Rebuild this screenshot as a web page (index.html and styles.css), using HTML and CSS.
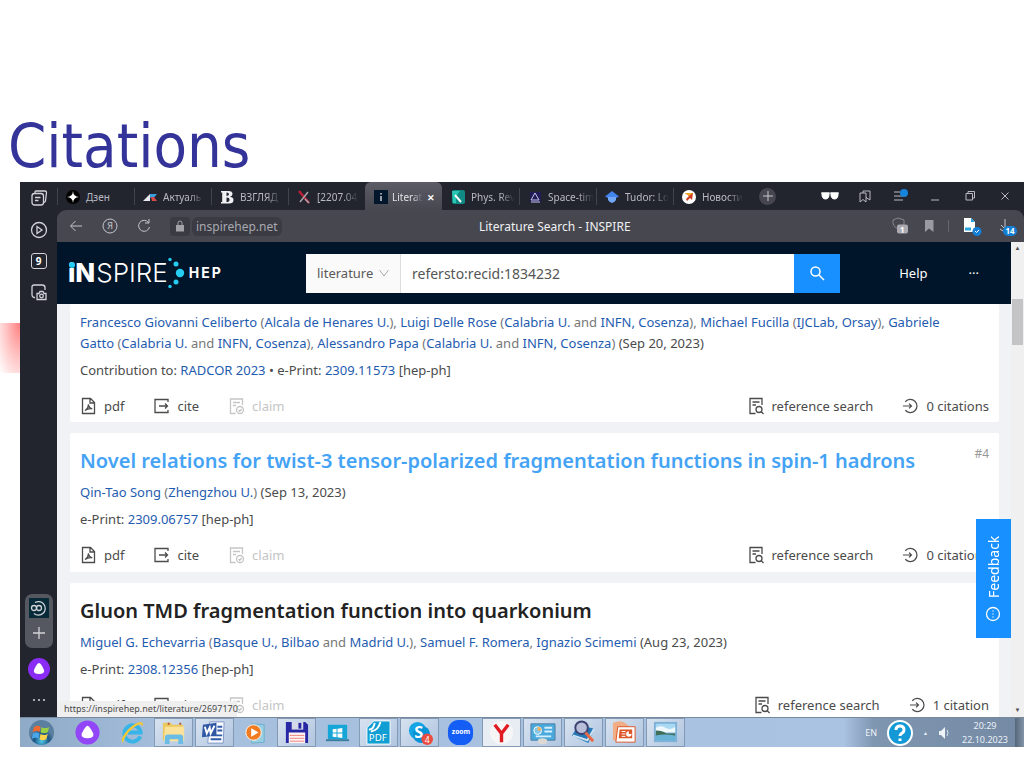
FILE: index.html
```html
<!DOCTYPE html>
<html lang="en">
<head>
<meta charset="utf-8">
<title>Citations</title>
<link rel="stylesheet" href="styles.css">
</head>
<body>
<svg class="defs" aria-hidden="true">
  <symbol id="pdf" viewBox="0 0 16 18"><path d="M2 1.500h8l4 4v11H2zM9.500 1.500V6H14M4.500 13.500C7 12 8 10 7.800 7.500C8.500 10.500 10 11.500 11.800 11.800C9 11.500 6.500 12 4.500 13.500z"/></symbol>
  <symbol id="cite" viewBox="0 0 16 18"><path d="M14.500 5V2.500H1.500V15.500H14.500V13M5.500 9H14M11.500 6.500L14 9L11.500 11.500"/></symbol>
  <symbol id="claim" viewBox="0 0 16 18"><path d="M14 8V2H2V16.500H7M4.500 5.500H11.500M4.500 8.500H7.500"/><circle cx="11.500" cy="13" r="3.500"/><path d="M10 13l1.200 1.200L13.300 12"/></symbol>
  <symbol id="ref" viewBox="0 0 16 18"><path d="M13.500 8V1.500H1.500V16.500H7M4 5H11M4 8H7.500M12.500 14.500L15 17"/><circle cx="10.500" cy="12.500" r="3"/></symbol>
  <symbol id="citations" viewBox="0 0 18 18"><path d="M3.500 4.500A7 7 0 1 1 3.500 13.500M1 9H10M7.500 6.500L10 9L7.500 11.500"/></symbol>
</svg>
<main class="slide">
  <h1 class="slide-title">Citations</h1>
  <div class="accent"></div>
  <section class="screen">
    <div class="browser">
      <aside class="side">
        <svg width="18" height="18" viewBox="0 0 18 18"><path d="M5 4V3q0-1 1-1h9q1.500 0 1.500 1.500L15.500 12q0 1-2 1.500"/><rect x="2" y="4.500" width="11.500" height="11.500" rx="2.500"/><path d="M5 8.500h5.500M5 11.500h3.500"/></svg>
        <svg width="18" height="18" viewBox="0 0 18 18"><circle cx="9" cy="9" r="7.500"/><path d="M7 5.500L12 9L7 12.500z"/></svg>
        <span class="nine">9</span>
        <svg width="18" height="18" viewBox="0 0 18 18"><path d="M5 14.500H4Q2 14 2 12V4Q2 2 4 2H12Q15 2 15 4.500V7"/><path d="M7 10.500h2l1-2h3l1 2h2v6H7z"/><circle cx="11.500" cy="13" r="1.800"/></svg>
        <div class="side-space"></div>
        <div class="group">
          <svg class="group-logo" width="20" height="20" viewBox="0 0 20 20"><rect width="20" height="20" fill="#062a38" stroke="none"/><circle cx="5" cy="10" r="2.500"/><circle cx="10" cy="10" r="2.500"/><path d="M6 4.500A6.800 6.800 0 1 1 5 15.500"/></svg>
          <svg width="14" height="14" viewBox="0 0 14 14"><path d="M7 1v12M1 7h12"/></svg>
        </div>
        <svg width="22" height="22" viewBox="0 0 22 22"><circle cx="11" cy="11" r="11" fill="#8a2cf5" stroke="none"/><path d="M11 5q2 0 5 7q1 4-5 4t-5-4q3-7 5-7z" fill="#fff" stroke="none"/></svg>
        <svg class="more" width="14" height="6" viewBox="0 0 14 6"><path d="M1 3h2M6 3h2M11 3h2"/></svg>
      </aside>
      <div class="window">
        <div class="tabs">
          <a class="tab" href="#"><svg viewBox="0 0 14 14"><circle cx="7" cy="7" r="7" fill="#000"/><path d="M7 1Q7.300 6.700 13 7Q7.300 7.300 7 13Q6.700 7.300 1 7Q6.700 6.700 7 1z" fill="#fff"/></svg><span>Дзен</span></a>
          <a class="tab" href="#"><svg viewBox="0 0 14 14"><path d="M0 11L7 4V11z" fill="#e6e9f0"/><path d="M7 4h7l-3 3.500H7z" fill="#38a0e0"/><path d="M8 7h3l3 4H9z" fill="#d84a48"/></svg><span>Актуаль</span></a>
          <a class="tab" href="#"><svg viewBox="0 0 14 14"><path d="M1 1h7.500q4 0 4 3q0 2-2.500 2.700q3.500.5 3.500 3.300q0 3.500-4.500 3.500H1v-1.500h1.200v-9.500H1zM6.500 2.500v3.500q2.500 0 2.500-1.800T6.500 2.500zM6.500 7.500v4.500q3 0 3-2.300T6.500 7.500z" fill="#f0f0f3" fill-rule="evenodd"/></svg><span>ВЗГЛЯД</span></a>
          <a class="tab" href="#"><svg viewBox="0 0 14 14"><path d="M2 1L12 13" stroke="#b72037" stroke-width="2.500"/><path d="M11 2L3 12M8 9l4 4" stroke="#aaa6aa" stroke-width="1.500"/></svg><span>[2207.04</span></a>
          <a class="tab active" href="#"><svg viewBox="0 0 14 14"><rect width="14" height="14" fill="#02172c"/><path d="M7 6v5M7 3v1.500" stroke="#eee" stroke-width="1.300"/></svg><span>Literat</span><b>✕</b></a>
          <a class="tab plain" href="#"><svg viewBox="0 0 14 14"><rect x="1" width="13" height="14" rx="2" fill="#118a83"/><path d="M1 1h8L5 6V13H2z" fill="#28c7b4"/><path d="M4 5l6 7" stroke="#fff" stroke-width="2"/></svg><span>Phys. Rev</span></a>
          <a class="tab" href="#"><svg viewBox="0 0 14 14"><path d="M2 2h11v10H2z" fill="#211b58"/><path d="M7 3L3 10h8zM3 12h9" fill="none" stroke="#c4c6e5"/></svg><span>Space-tim</span></a>
          <a class="tab" href="#"><svg viewBox="0 0 14 14"><path d="M7 1L14 6.500L7 10L0 6.500z" fill="#4384ee"/><path d="M3 7h8v3q-2 3-4 3t-4-3z" fill="#72a7f5"/></svg><span>Tudor: Lo</span></a>
          <a class="tab" href="#"><svg viewBox="0 0 14 14"><circle cx="7" cy="7" r="7" fill="#fff"/><path d="M3 3h8L10 10L8 8L5 11L4 9L7 6z" fill="#cf3a22"/><path d="M3 3l4 3l4-3z" fill="#f2aa25"/></svg><span>Новости</span></a>
          <button class="plus" aria-label="New tab"><svg width="10" height="10" viewBox="0 0 10 10"><path d="M5 0v10M0 5h10"/></svg></button>
          <div class="controls">
            <svg viewBox="0 0 20 14"><path d="M1 4h18M2 4h7q.5 6-3.500 6T2 4zM11 4h7q.5 6-3.500 6T11 4z" fill="#fff" stroke="#fff"/></svg>
            <svg viewBox="0 0 20 14"><path d="M5 4h6v9l-3-2.500L5 13zM8 4V2h7v9l-4-2.500"/></svg>
            <svg viewBox="0 0 20 14"><path d="M4 3h6M4 7h11M4 11h9"/><circle cx="14" cy="4" r="4" fill="#1684dc" stroke="none"/></svg>
            <svg viewBox="0 0 20 14"><path d="M6 11h8"/></svg>
            <svg viewBox="0 0 20 14"><path d="M6 4.500h6.500v6.500H6zM8 4.500v-2h6.500V9H12.500"/></svg>
            <svg viewBox="0 0 20 14"><path d="M6.500 3.500l7 7M13.500 3.500l-7 7"/></svg>
          </div>
        </div>
        <div class="toolbar">
          <button aria-label="Back"><svg viewBox="0 0 16 16"><path d="M14 8H3M7.500 3L2.500 8l5 5"/></svg></button>
          <button class="yandex" aria-label="Yandex"><svg viewBox="0 0 16 16"><circle cx="8" cy="8" r="7"/></svg><span>Я</span></button>
          <button aria-label="Reload"><svg viewBox="0 0 16 16"><path d="M12.500 4.500A5.500 5.500 0 1 0 13.500 9M9 5h4V1"/></svg></button>
          <span class="lock"><svg viewBox="0 0 12 12"><path d="M2 5h8v6.500H2z" fill="#a2a2a8" stroke="none"/><path d="M4 5V3q0-2 2-2t2 2v2"/></svg></span>
          <a class="host" href="#">inspirehep.net</a>
          <div class="page-title">Literature Search - INSPIRE</div>
          <div class="tools">
            <svg viewBox="0 0 20 20"><path d="M3 4l5-2l6 2v4q-1 4-5 5Q2 11 3 4z" stroke="#85858d"/><rect x="7" y="8.500" width="11" height="9" rx="2" fill="#aaaab0" stroke="none"/><text x="10" y="16.500">1</text></svg>
            <svg viewBox="0 0 20 20"><path d="M6 4h8.500v12L10 12.500L6 16z" fill="#9a9aa2" stroke="none"/></svg>
            <i></i>
            <svg viewBox="0 0 20 20"><path d="M2 2h7l4 4v10H2z" fill="#fff" stroke="none"/><path d="M9 2l4 4H9z" fill="#20a0dd" stroke="none"/><path d="M3 13h6" stroke="#27a7db" stroke-width="3"/><circle cx="15" cy="15.500" r="4.500" fill="#147fd6" stroke="none"/><path d="M13 15l1.500 1.500L17 14" stroke="#fff"/></svg>
            <span class="download"><svg viewBox="0 0 20 20"><path d="M8 3v10M4 9l4 4l3-3M3 13l3 2"/></svg><b>14</b></span>
          </div>
        </div>
        <div class="viewport">
          <div class="page">
            <header class="site-header">
              <a class="logo" href="#"><span class="in">iN</span><span class="spire">SPIRE</span><svg width="17" height="32" viewBox="0 0 17 32"><g fill="#25cdf2"><circle cx="2" cy="2.500" r="1.700"/><circle cx="8" cy="7" r="2.500"/><circle cx="12" cy="16" r="4.200"/><circle cx="8" cy="25" r="2.500"/><circle cx="2" cy="29.500" r="1.700"/></g></svg><span class="hep">HEP</span></a>
              <form class="search">
                <div class="kind"><select aria-label="Collection"><option>literature</option></select><svg width="10" height="8" viewBox="0 0 10 8"><path d="M0.500 1L5 7L9.500 1"/></svg></div>
                <input type="text" aria-label="Search" value="refersto:recid:1834232">
                <button type="button" aria-label="Search"><svg width="16" height="16" viewBox="0 0 16 16"><circle cx="6.500" cy="6.500" r="4.500"/><path d="M10 10l5 5"/></svg></button>
              </form>
              <nav><a href="#">Help</a><a href="#">···</a></nav>
            </header>
            <div class="results">
              <article class="card first">
                <p class="authors"><a href="#">Francesco Giovanni Celiberto</a> (<a href="#">Alcala de Henares U.</a>), <a href="#">Luigi Delle Rose</a> (<a href="#">Calabria U.</a> and <a href="#">INFN, Cosenza</a>), <a href="#">Michael Fucilla</a> (<a href="#">IJCLab, Orsay</a>), <a href="#">Gabriele Gatto</a> (<a href="#">Calabria U.</a> and <a href="#">INFN, Cosenza</a>), <a href="#">Alessandro Papa</a> (<a href="#">Calabria U.</a> and <a href="#">INFN, Cosenza</a>) <em>(Sep 20, 2023)</em></p>
                <p class="meta">Contribution to: <a href="#">RADCOR 2023</a> • e-Print: <a href="#">2309.11573</a> [hep-ph]</p>
                <div class="actions"><button><svg class="ic"><use href="#pdf"/></svg>pdf</button><button><svg class="ic"><use href="#cite"/></svg>cite</button><button disabled><svg class="ic"><use href="#claim"/></svg>claim</button><a class="push" href="#"><svg class="ic"><use href="#ref"/></svg>reference search</a><a href="#"><svg class="ic"><use href="#citations"/></svg>0 citations</a></div>
              </article>
              <article class="card">
                <span class="num">#4</span>
                <h2><a href="#" class="hovered">Novel relations for twist-3 tensor-polarized fragmentation functions in spin-1 hadrons</a></h2>
                <p class="authors"><a href="#">Qin-Tao Song</a> (<a href="#">Zhengzhou U.</a>) <em>(Sep 13, 2023)</em></p>
                <p class="meta">e-Print: <a href="#">2309.06757</a> [hep-ph]</p>
                <div class="actions"><button><svg class="ic"><use href="#pdf"/></svg>pdf</button><button><svg class="ic"><use href="#cite"/></svg>cite</button><button disabled><svg class="ic"><use href="#claim"/></svg>claim</button><a class="push" href="#"><svg class="ic"><use href="#ref"/></svg>reference search</a><a href="#"><svg class="ic"><use href="#citations"/></svg>0 citations</a></div>
              </article>
              <article class="card">
                <h2><a href="#">Gluon TMD fragmentation function into quarkonium</a></h2>
                <p class="authors"><a href="#">Miguel G. Echevarria</a> (<a href="#">Basque U., Bilbao</a> and <a href="#">Madrid U.</a>), <a href="#">Samuel F. Romera</a>, <a href="#">Ignazio Scimemi</a> <em>(Aug 23, 2023)</em></p>
                <p class="meta">e-Print: <a href="#">2308.12356</a> [hep-ph]</p>
                <div class="actions"><button><svg class="ic"><use href="#pdf"/></svg>pdf</button><button><svg class="ic"><use href="#cite"/></svg>cite</button><button disabled><svg class="ic"><use href="#claim"/></svg>claim</button><a class="push" href="#"><svg class="ic"><use href="#ref"/></svg>reference search</a><a href="#"><svg class="ic"><use href="#citations"/></svg>1 citation</a></div>
              </article>
            </div>
            <button class="feedback"><svg width="16" height="16" viewBox="0 0 16 16"><circle cx="8" cy="8" r="6.500"/><path d="M8 4.500v1M8 7.500v1M8 10.500v1"/></svg><span>Feedback</span></button>
            <div class="status">https://inspirehep.net/literature/2697170</div>
          </div>
          <div class="scroll"><span>▲</span><i></i><span>▼</span></div>
        </div>
      </div>
    </div>
    <footer class="taskbar">
      <button class="start" aria-label="Start"><svg viewBox="0 0 28 28"><defs><radialGradient id="orb" cy=".85"><stop offset="0" stop-color="#4fc6e8"/><stop offset=".6" stop-color="#1c5585"/><stop offset="1" stop-color="#5b7f9e"/></radialGradient></defs><circle cx="14" cy="14" r="13" fill="url(#orb)"/><path d="M6 8.500q4-2.500 7-.5l-1 5.500q-3-2-7 .3z" fill="#ee6a32"/><path d="M14 8.500q4 2 8-.3l-1.500 5.500q-4 2-7.500.3z" fill="#9bd044"/><path d="M5 15q4-2 7 0l-1 5.500q-3-2-7 0z" fill="#4aa6ea"/><path d="M13 15.500q4 2 7.500 0L19 21q-4 2-7 0z" fill="#fcd34a"/></svg></button>
      <button class="alice" aria-label="Alice"><svg viewBox="0 0 28 28"><circle cx="14" cy="14" r="12.500" fill="#9146f7"/><path d="M14 7q2 0 6 8q1 5-6 5t-6-5q4-8 6-8z" fill="#fff"/></svg></button>
      <button class="app" aria-label="Internet Explorer"><svg viewBox="0 0 28 28"><path d="M22 18A8.500 8.500 0 1 1 22.500 14H9" fill="none" stroke="#37b5e8" stroke-width="4"/><path d="M4 25C-1 20 14 3 23 3q3 1 1 5C24 1 8 11 4 25z" fill="#f2c836"/></svg></button>
      <button class="app open" aria-label="Explorer"><svg viewBox="0 0 28 28"><path d="M3 4h8l2 2h11v16H3z" fill="#edc85f"/><path d="M5 8h20v15H4z" fill="#fae29a"/><path d="M5 26v-7q0-3 3-3h13q3 0 3 3v7h-5v-5h-9v5z" fill="#6bbce5"/><path d="M8 5h2M20 5h2" stroke="#b35a3b" stroke-width="2"/></svg></button>
      <button class="app open" aria-label="Word"><svg viewBox="0 0 28 28"><path d="M9 3h15l-1 22H7z" fill="#f9fbff" stroke="#7f98c6"/><path d="M17 8h5M17 12h5M11 17h11M10 21h11" stroke="#315ba9" stroke-width="2"/><path d="M2 6l14-2v13L1 19z" fill="#2f57a4"/><path d="M4 8l2 7 3-6 1 6 4-8" stroke="#fff" stroke-width="2" fill="none"/></svg></button>
      <button class="app" aria-label="Media Player"><svg viewBox="0 0 28 28"><path d="M10 5l13 1v18l-13 1z" fill="#9acee2" stroke="#6ab0cd"/><circle cx="12" cy="14" r="8" fill="#f17b20" stroke="#fff5e7"/><path d="M9.500 9.500L17 14l-7.500 4.500z" fill="#fff"/></svg></button>
      <button class="app open" aria-label="Total Commander"><svg viewBox="0 0 28 28"><path d="M3 3h20l3 3v19H3z" fill="#2828a5"/><path d="M9 3h12v8H9z" fill="#d5d9e8"/><path d="M16 4h3v6h-3z" fill="#2828a5"/><path d="M6 14h17v11H6z" fill="#fff3f2"/><path d="M7 17h15M7 20h15M7 23h15" stroke="#ed817f"/></svg></button>
      <button class="app" aria-label="Windows"><svg viewBox="0 0 28 28"><path d="M4 6h20v15H4z" fill="#15a6d7"/><path d="M2 21h24v2H2z" fill="#387c9e"/><path d="M9 10.500l4-.5v4H9zM14 10l5-.7V14h-5zM9 15h4v4l-4-.6zM14 15h5v4.700L14 19z" fill="#fff"/></svg></button>
      <button class="app open" aria-label="PDF"><svg viewBox="0 0 28 28"><path d="M9 2h17v24H2V9z" fill="#119ed2" stroke="#fff"/><path d="M4 11Q9 11 10 4M6 13Q14 12 16 3" stroke="#fff" fill="none" stroke-width="2"/><text x="4" y="23" font-size="10">PDF</text></svg></button>
      <button class="app open" aria-label="Skype"><svg viewBox="0 0 28 28"><circle cx="12" cy="12" r="9" fill="#16a5e4"/><circle cx="16" cy="16" r="9" fill="#0793d7"/><text x="8.500" y="20" font-size="17" font-weight="700">S</text><circle cx="22" cy="21" r="6" fill="#ec4b3f"/><text x="19.500" y="24.500" font-size="9">4</text></svg></button>
      <button class="app" aria-label="Zoom"><svg viewBox="0 0 28 28"><rect x="1" y="1" width="26" height="26" rx="11" fill="#145df5"/><text x="5" y="16" font-size="7" font-weight="700">zoom</text></svg></button>
      <button class="app open bright" aria-label="Yandex"><svg viewBox="0 0 28 28"><circle cx="14" cy="14" r="12" fill="#f6f6f7"/><path d="M7 6l7 9l7-9M14 14v10" fill="none" stroke="#e01c22" stroke-width="3.500"/></svg></button>
      <button class="app open" aria-label="Control Panel"><svg viewBox="0 0 28 28"><path d="M2 5h25v17H2z" fill="#4aa9dc" stroke="#4f80a4"/><circle cx="9" cy="12" r="4" fill="#85c7e9" stroke="#fff"/><path d="M9 8v4h4q0-4-4-4z" fill="#f5b154"/><path d="M16 9h8M16 13h8M7 18h16" stroke="#d6effb" stroke-width="2"/><ellipse cx="14" cy="23" rx="5" ry="3" fill="#dcd8d3"/></svg></button>
      <button class="app open" aria-label="Search tool"><svg viewBox="0 0 28 28"><path d="M2 17L9 6l16 4l-6 15z" fill="#2378b5"/><path d="M3 17l15 5l7-12" fill="none" stroke="#cde2f3" stroke-width="2"/><circle cx="12" cy="9" r="6.500" fill="#b8bed9" stroke="#3c4071" stroke-width="2"/><path d="M16 14l8 9" stroke="#e76945" stroke-width="3"/></svg></button>
      <button class="app open" aria-label="PowerPoint"><svg viewBox="0 0 28 28"><path d="M2 4Q12-1 19 8L6 22H2z" fill="#f1ad86"/><path d="M7 8h18v16H5z" fill="#fff" stroke="#da552a"/><path d="M9 11h13v9H8z" fill="#dc5527"/><path d="M11 13h4M11 15.500h4M11 18h4" stroke="#fff"/><circle cx="18.500" cy="15.500" r="2.800" fill="#fff"/><path d="M18.500 15.500v-3h3v3z" fill="#dc5527"/></svg></button>
      <button class="app open" aria-label="Picture"><svg viewBox="0 0 28 28"><path d="M2 3h24v21H2z" fill="#7fb2d8"/><path d="M4 5h20v8H4z" fill="#a9d8f2"/><path d="M4 9q5-3 10 0t10-1v6H4z" fill="#eef7fb"/><path d="M4 12q7 0 11 3h9v3H4z" fill="#3f6f58"/><path d="M4 17q9-2 20 0v5H4z" fill="#69b3d6"/></svg></button>
      <div class="tray"><span>EN</span><svg width="26" height="26" viewBox="0 0 26 26"><circle cx="13" cy="13" r="12" fill="#1399d6" stroke="#fff" stroke-width="2"/><path d="M9 10q0-4 4-4t4 4q0 2-2.500 3.500Q13 14.500 13 16M13 18.500v2.500" fill="none" stroke="#fff" stroke-width="3"/></svg><small>▲</small><svg width="12" height="14" viewBox="0 0 12 14"><path d="M1 5h2l4-4v12L3 9H1z" fill="#eef3f8"/><path d="M9 4q2 3 0 6" fill="none" stroke="#d5deea"/></svg><time>20:29<br>22.10.2023</time></div>
      <div class="peek"></div>
    </footer>
  </section>
</main>
</body>
</html>
```
FILE: styles.css
```css
* { box-sizing: border-box; }
body { margin: 0; background: #fff; font-family: "Noto Sans", "Open Sans", sans-serif; font-size: 13px; color: #4b4b4b; }
a { color: inherit; text-decoration: none; }
button { border: 0; padding: 0; background: none; font: inherit; color: inherit; }
svg { flex: none; }
p, h1, h2 { margin: 0; }
.defs { position: absolute; width: 0; height: 0; }

.slide { position: relative; height: 100vh; min-height: 600px; display: flex; flex-direction: column; padding-bottom: 21px; }
.slide-title { padding: 108px 8px 0; height: 182px; flex: none; font: 400 61px/76px "DejaVu Sans Condensed", "DejaVu Sans", sans-serif; color: #333399; }
.accent { position: absolute; left: 0; top: 323px; width: 20px; height: 50px; background: radial-gradient(ellipse at 100% 0, #ff8080, #ffc4c4 50%, #fff 100%); }
.screen { flex: 1; min-height: 0; margin-left: 20px; display: flex; flex-direction: column; position: relative; }
.browser { flex: 1; min-height: 0; display: flex; background: #22242e; }

.side { width: 37px; flex: none; display: flex; flex-direction: column; align-items: center; gap: 14px; padding: 7px 0 14px; }
.side svg { fill: none; stroke: #d2d3d8; stroke-width: 1.3; }
.side .more { margin-top: 3px; stroke: #aaabb1; stroke-width: 2; }
.nine { width: 16px; height: 16px; border: 1px solid #d2d3d8; border-radius: 3px; font: 700 10px/14px "Noto Sans", sans-serif; color: #fff; text-align: center; }
.side-space { flex: 1; }
.group { width: 28px; height: 54px; margin-bottom: -4px; border-radius: 7px; background: #565861; display: flex; flex-direction: column; align-items: center; gap: 8px; padding-top: 4px; }

.window { flex: 1; min-width: 0; display: flex; flex-direction: column; }
.tabs { height: 28px; flex: none; display: flex; align-items: stretch; color: #b9bac2; font-size: 10px; }
.tab { position: relative; width: 77px; display: flex; align-items: center; gap: 6px; padding: 2px 7px 0 8px; overflow: hidden; white-space: nowrap; border-left: 1px solid transparent; border-image: linear-gradient(transparent 25%, #41434d 25%, #41434d 80%, transparent 80%) 1; }
.tab svg { width: 14px; height: 14px; }
.tab span { flex: 1; mask-image: linear-gradient(90deg, #000 65%, transparent); }
.tab:first-child span { mask-image: none; }
.tab b { font-size: 9px; color: #fff; }
.tab.active { border-image: none; gap: 4px; background: linear-gradient(#5b5c65, #46474f); border-radius: 6px 6px 0 0; color: #e2e2e5; }
.tab.plain { border-image: none; }
.plus { width: 17px; height: 17px; align-self: center; margin-left: 9px; border-radius: 50%; background: #45464f; }
.plus svg { display: block; margin: auto; stroke: #c8c9ce; }
.controls { margin-left: auto; display: flex; align-items: center; gap: 15px; padding-right: 9px; }
.controls svg { width: 20px; height: 14px; fill: none; stroke: #b9bac1; }

.toolbar { height: 32px; flex: none; display: flex; align-items: center; background: #46474f; border-radius: 9px 9px 0 0; padding: 0 7px 0 11px; color: #c9c9ce; }
.toolbar svg { display: block; width: 16px; height: 16px; fill: none; stroke: #c5c6cc; }
.toolbar button { width: 16px; height: 16px; margin-right: 18px; }
.toolbar .yandex { display: grid; font-size: 9px; line-height: 16px; }
.yandex > * { grid-area: 1 / 1; }
.lock { width: 20px; height: 19px; border-radius: 4px; background: #3a3b43; margin-right: 2px; display: grid; place-items: center; }
.toolbar .lock svg { width: 12px; height: 12px; stroke: #a2a2a8; }
.host { border-radius: 6px; background: #3a3b43; padding: 0 4px; font-size: 12px; line-height: 19px; color: #a9a9b0; }
.page-title { flex: 1; text-align: center; padding-right: 62px; font-size: 12px; color: #f1f1f3; }
.tools { display: flex; align-items: center; gap: 9px; }
.tools svg { width: 20px; height: 20px; }
.tools text { font: 700 8px "Noto Sans", sans-serif; fill: #fff; stroke: none; }
.tools i { width: 1px; height: 12px; background: #65666e; margin-right: 4px; }
.download { position: relative; margin-left: 6px; }
.download b { position: absolute; right: 0; bottom: 0; width: 14px; height: 10px; border-radius: 5px; background: #147fd6; color: #fff; font-size: 8px; line-height: 10px; text-align: center; }

.viewport { flex: 1; min-height: 0; display: flex; }
.page { flex: 1; min-width: 0; position: relative; overflow: hidden; background: #f0f2f5; }
.scroll { width: 13px; background: #f0f0f0; display: flex; flex-direction: column; align-items: center; font-size: 6px; line-height: 13px; color: #4d4d4d; }
.scroll i { width: 11px; height: 46px; margin: 44px 0 auto; background: #c4c4c6; }

.site-header { height: 62px; display: flex; align-items: center; padding: 0 32px 0 11px; background: #001529; color: #fff; }
.logo { position: relative; display: flex; align-items: center; width: 238px; flex: none; font: 300 26px/32px Inter, sans-serif; }
.logo::before { content: ""; position: absolute; left: 1px; top: 5px; width: 6px; height: 6px; border-radius: 50%; background: #25cdf2; }
.in { font-weight: 800; }
.logo .spire { margin-left: 1px; }
.hep { margin-left: 4px; font-size: 14px; font-weight: 700; letter-spacing: 2px; }
.search { flex: 1; max-width: 534px; height: 39px; display: flex; }
.kind { position: relative; width: 95px; background: #fafafa; border-right: 1px solid #ddd; display: flex; align-items: center; }
.kind select { appearance: none; width: 100%; height: 100%; border: 0; padding: 0 0 0 11px; background: none; font: 13px "Noto Sans", sans-serif; color: #595959; }
.kind svg { position: absolute; right: 11px; fill: none; stroke: #aaa; pointer-events: none; }
.search input { flex: 1; min-width: 0; border: 0; padding: 0 11px; background: #fff; font: 14px "Noto Sans", sans-serif; color: #555; }
.search button { width: 46px; background: #1890ff; display: grid; place-items: center; }
.search button svg { fill: none; stroke: #fff; stroke-width: 1.5; }
.site-header nav { margin-left: auto; display: flex; gap: 41px; }

.results { padding: 0 12px 0 13px; display: flex; flex-direction: column; gap: 11px; }
.card { position: relative; height: 139px; flex: none; background: #fff; border-radius: 2px; padding: 12px 10px 0; }
.card.first { height: 118px; padding-top: 8px; }
.card h2 { font: 600 20px/32px "Noto Sans", "Open Sans", sans-serif; color: #222; margin-bottom: 5px; white-space: nowrap; }
.card .hovered { color: #45a3f5; }
.authors { line-height: 21px; color: #777; padding-right: 30px; }
.authors em { font-style: normal; color: #4b4b4b; }
.authors a, .meta a { color: #1f5cb0; }
.meta { line-height: 22px; margin-top: 5px; }
.num { position: absolute; right: 10px; top: 12px; font-size: 12px; line-height: 18px; color: #999; }
.actions { display: flex; align-items: center; height: 22px; margin-top: 14px; gap: 29px; color: #4b4b4b; }
.actions > * { display: flex; align-items: center; gap: 7px; }
.actions .push { margin-left: auto; }
.actions [disabled] { color: #c5c5c5; }
.ic { width: 17px; height: 18px; fill: none; stroke: currentColor; stroke-width: 1.3; }
.feedback { position: absolute; right: 0; bottom: 79px; width: 35px; height: 119px; background: #1890ff; color: #fff; writing-mode: vertical-rl; transform: rotate(180deg); display: flex; align-items: center; justify-content: center; gap: 8px; font-size: 14px; }
.feedback svg { fill: none; stroke: #fff; stroke-width: 1.3; }
.status { position: absolute; left: 0; bottom: 0; width: 180px; height: 16px; padding-left: 7px; background: #efeff0; font-size: 9px; line-height: 16px; white-space: nowrap; }

.taskbar { height: 30px; flex: none; display: flex; align-items: stretch; background: linear-gradient(90deg, #8eaac6, #a6bfdd 15%, #aac3e2 82%, #7f96b1 85%, #7389a4); border-top: 1px solid #78899c; }
.taskbar button { display: grid; place-items: center; }
.taskbar button svg { width: 27px; height: 27px; }
.taskbar text { fill: #fff; font-family: "Noto Sans", sans-serif; }
.start { width: 42px; }
.alice { width: 51px; }
.app { width: 39px; margin-right: 2px; }
.app.open { border: 1px solid #8499b4; background: linear-gradient(135deg, #d7e2f0, #b0c5df); }
.app.bright { background: #e8edf4; }
.tray { margin-left: auto; display: flex; align-items: center; gap: 10px; color: #edf2f7; font-size: 9px; line-height: 14px; text-align: center; }
.tray small { font-size: 5px; }
.tray time { margin-left: 2px; }
.peek { width: 9px; margin-left: 7px; background: linear-gradient(90deg, #56677a, #8294a8); }
```
